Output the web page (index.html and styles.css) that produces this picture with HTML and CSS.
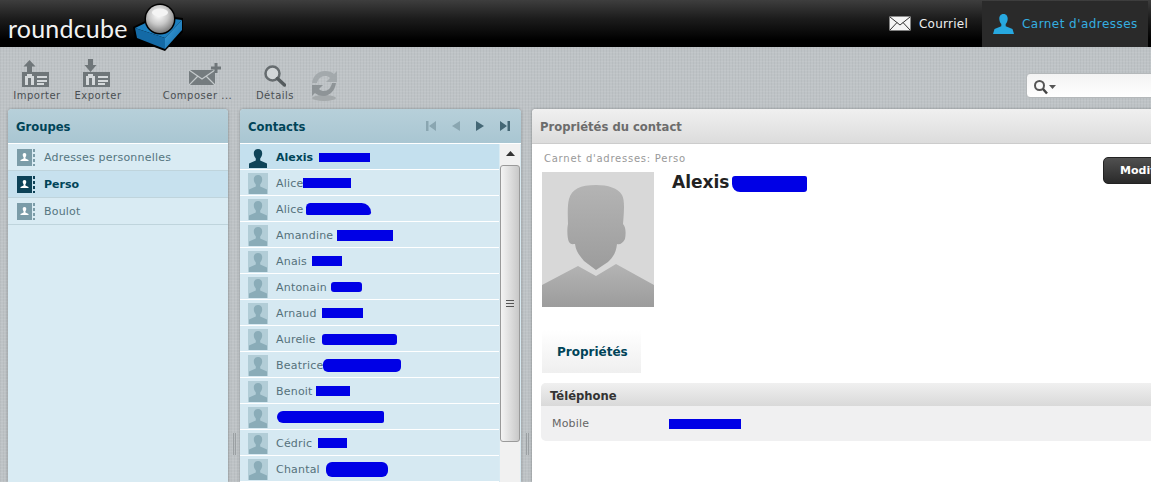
FILE: index.html
```html
<!DOCTYPE html>
<html lang="fr">
<head>
<meta charset="utf-8">
<title>Roundcube - Carnet d'adresses</title>
<link rel="stylesheet" href="styles.css">
</head>
<body>
<svg class="defs" width="0" height="0">
  <defs>
    <linearGradient id="photoG" x1="0" y1="0" x2="0" y2="1"><stop offset="0" stop-color="#b4b4b4"/><stop offset="1" stop-color="#9c9c9c"/></linearGradient>
    <linearGradient id="boxG" x1="0" y1="0" x2="1" y2="1"><stop offset="0" stop-color="#3fa0dc"/><stop offset="1" stop-color="#0f6aa8"/></linearGradient>
    <radialGradient id="ballG" cx=".45" cy=".35" r=".7"><stop offset="0" stop-color="#ffffff"/><stop offset=".5" stop-color="#c8c8c8"/><stop offset="1" stop-color="#6e6e6e"/></radialGradient>
    <symbol id="man" viewBox="0 0 20 20">
      <path d="M10 1c-2.800 0-4.200 1.800-4.200 4.200 0 2 .7 3.900 2 5.200v2L1 15.500V20h18v-4.500l-6.800-3.100v-2c1.300-1.300 2-3.200 2-5.200C14.200 2.800 12.800 1 10 1z"/>
    </symbol>
    <symbol id="grp" viewBox="0 0 18 17">
      <rect width="15" height="17"/>
      <path fill="#fff" d="M7.500 4c-1.200 0-1.800.9-1.800 1.900 0 1 .4 1.800.9 2.300v1.300l-3.100 1.400V12h8v-1.100L8.400 9.500V8.200c.5-.5.9-1.300.9-2.300C9.300 4.900 8.700 4 7.500 4z"/>
      <path d="M16 0h2v3h-2zM16 5h2v3h-2zM16 10h2v3h-2zM16 15h2v2h-2z"/>
    </symbol>
    <symbol id="card" viewBox="0 0 27 15">
      <rect width="27" height="15" fill="#6f7679"/>
      <path fill="#d5d9db" d="M3 13V4h2V2h5v2h2v9h-3V6H6v7zM15 4h10v2H15zM15 8h10v2H15zM15 11h7v2h-7z"/>
    </symbol>
  </defs>
</svg>

<header class="topbar">
  <div class="logo">
    <span class="logo-text">roundcube</span>
    <svg class="logo-mark" width="52" height="48" viewBox="0 0 52 48">
      <path d="M1 24 L25 12 L51 15 L51 29 L33 48 L3 37 Z" fill="#000"/>
      <path d="M3 25 L26 14 L50 17 L33 35 Z" fill="#1b7fc0"/>
      <path d="M3 25 L33 35 L33 46 L5 35 Z" fill="#146aa6"/>
      <path d="M33 35 L50 17 L50 27 L33 46 Z" fill="url(#boxG)"/>
      <circle cx="28" cy="16" r="15.500" fill="#000"/>
      <circle cx="28" cy="16" r="14" fill="url(#ballG)"/>
      <ellipse cx="28" cy="9.500" rx="8" ry="4" fill="#f4f4f4"/>
    </svg>
  </div>
  <nav class="taskbar">
    <a class="task">
      <svg width="22" height="15" viewBox="0 0 22 15"><rect x=".5" y=".5" width="21" height="14" fill="#f4f4f4"/><path d="M1 1l10 8 10-8M1 14l7-7.500M21 14l-7-7.500" fill="none" stroke="#333" stroke-width="1"/></svg>
      <span>Courriel</span>
    </a>
    <a class="task task-on">
      <svg width="21" height="20" viewBox="0 0 21 20"><path fill="#27a8e0" d="M10.500 0C7.500 0 6.300 2.200 6.300 4.800c0 2 .8 4 2 5.200v2.200L1.500 15 0 20h21l-1.500-5-6.800-2.800V10c1.200-1.200 2-3.200 2-5.200C14.700 2.200 13.500 0 10.500 0z"/></svg>
      <span>Carnet d'adresses</span>
    </a>
  </nav>
</header>

<div class="toolbar">
  <a class="tool tool-import">
    <svg class="tool-icon" width="28" height="28" viewBox="0 0 28 28"><path fill="#6f7679" d="M7.500 1l6 6.500h-3.500V13H5V7.500H1.500z"/><use href="#card" x="0" y="13" width="27" height="15"/></svg>
    <span>Importer</span>
  </a>
  <a class="tool tool-export">
    <svg class="tool-icon" width="28" height="28" viewBox="0 0 28 28"><path fill="#6f7679" d="M5 0h5v6h3.500l-6 7-6-7H5z"/><use href="#card" x="0" y="13" width="27" height="15"/></svg>
    <span>Exporter</span>
  </a>
  <a class="tool tool-compose">
    <svg class="compose-icon" width="32" height="28" viewBox="0 0 32 28"><path fill="#757c7f" d="M0 11h26v15H0z"/><path fill="none" stroke="#c5cacc" stroke-width="1.200" d="M0 11l13 9 13-9M0 26l9-9M26 26l-9-9"/><path fill="#6f7679" d="M25.500 4h3v3.500H32v3h-3.500V14h-3v-3.500H22v-3h3.500z"/></svg>
    <span>Composer ...</span>
  </a>
  <a class="tool tool-details">
    <svg width="22" height="22" viewBox="0 0 22 22"><circle cx="8.500" cy="8.500" r="7" fill="#d2d6d8" stroke="#666c6f" stroke-width="2.500"/><path d="M13.500 13.500l7 6.500" stroke="#555b5e" stroke-width="3.500" stroke-linecap="round"/></svg>
    <span>Détails</span>
  </a>
  <a class="tool tool-refresh">
    <svg width="30" height="33" viewBox="0 0 30 33"><ellipse cx="15" cy="30" rx="12" ry="3" fill="#a4a9ab"/><path fill="#a3a9ac" d="M3 15C4 7 10 3 16 3c4 0 7 1 9 3l3-3v11H17l4-4c-1.500-1.500-3-2-5-2-4 0-7 3-8 7z"/><path fill="#8e9497" d="M27 15c-1 8-7 13-12 13-4 0-7-1-9-3l-3 3V17h11l-4 4c1.500 1.500 3 2 5 2 4 0 7-3 8-8z"/></svg>
  </a>
  <div class="search">
    <svg width="24" height="16" viewBox="0 0 24 16"><circle cx="6.500" cy="6.500" r="4.500" fill="none" stroke="#555" stroke-width="2"/><path d="M10 10l4 4.500" stroke="#444" stroke-width="2.500"/><path d="M16 6h7l-3.500 4z" fill="#555"/></svg>
  </div>
</div>

<main class="layout">
  <section class="panel groups">
    <h2 class="panel-head">Groupes</h2>
    <ul class="group-list">
      <li class="group"><svg class="gicon" width="18" height="17"><use href="#grp"/></svg>Adresses personnelles</li>
      <li class="group group-on"><svg class="gicon" width="18" height="17"><use href="#grp"/></svg>Perso</li>
      <li class="group"><svg class="gicon" width="18" height="17"><use href="#grp"/></svg>Boulot</li>
    </ul>
  </section>

  <div class="splitter"><i class="grip"></i></div>

  <section class="panel contacts">
    <h2 class="panel-head contacts-head">
      <span>Contacts</span>
      <span class="pager">
        <svg width="10" height="10" viewBox="0 0 10 10"><path class="pg-off" d="M0 0h2.500v10H0zM10 0v10L3 5z"/></svg>
        <svg width="8" height="10" viewBox="0 0 8 10"><path class="pg-off" d="M8 0v10L0 5z"/></svg>
        <svg width="8" height="10" viewBox="0 0 8 10"><path class="pg-on" d="M0 0v10l8-5z"/></svg>
        <svg width="10" height="10" viewBox="0 0 10 10"><path class="pg-on" d="M0 0v10l7-5zM7.500 0H10v10H7.500z"/></svg>
      </span>
    </h2>
    <div class="contacts-body">
      <ul class="contact-list">
        <li class="contact contact-on"><span class="tile"><svg width="20" height="20"><use href="#man"/></svg></span><span>Alexis</span><i class="mark m1"></i></li>
        <li class="contact"><span class="tile"><svg width="20" height="20"><use href="#man"/></svg></span><span>Alice</span><i class="mark m2"></i></li>
        <li class="contact"><span class="tile"><svg width="20" height="20"><use href="#man"/></svg></span><span>Alice</span><i class="mark m3"></i></li>
        <li class="contact"><span class="tile"><svg width="20" height="20"><use href="#man"/></svg></span><span>Amandine</span><i class="mark m4"></i></li>
        <li class="contact"><span class="tile"><svg width="20" height="20"><use href="#man"/></svg></span><span>Anais</span><i class="mark m5"></i></li>
        <li class="contact"><span class="tile"><svg width="20" height="20"><use href="#man"/></svg></span><span>Antonain</span><i class="mark m6"></i></li>
        <li class="contact"><span class="tile"><svg width="20" height="20"><use href="#man"/></svg></span><span>Arnaud</span><i class="mark m7"></i></li>
        <li class="contact"><span class="tile"><svg width="20" height="20"><use href="#man"/></svg></span><span>Aurelie</span><i class="mark m8"></i></li>
        <li class="contact"><span class="tile"><svg width="20" height="20"><use href="#man"/></svg></span><span>Beatrice</span><i class="mark m9"></i></li>
        <li class="contact"><span class="tile"><svg width="20" height="20"><use href="#man"/></svg></span><span>Benoit</span><i class="mark m10"></i></li>
        <li class="contact"><span class="tile"><svg width="20" height="20"><use href="#man"/></svg></span><i class="mark m11"></i></li>
        <li class="contact"><span class="tile"><svg width="20" height="20"><use href="#man"/></svg></span><span>Cédric</span><i class="mark m12"></i></li>
        <li class="contact"><span class="tile"><svg width="20" height="20"><use href="#man"/></svg></span><span>Chantal</span><i class="mark m13"></i></li>
      </ul>
      <div class="scrollbar">
        <div class="sb-up"><svg width="9" height="5" viewBox="0 0 9 5"><path d="M4.500 0L9 5H0z" fill="#333"/></svg></div>
        <div class="sb-thumb"><i class="sb-grip"></i></div>
      </div>
    </div>
  </section>

  <div class="splitter splitter-narrow"><i class="grip"></i></div>

  <section class="panel details">
    <h2 class="details-head">Propriétés du contact</h2>
    <div class="details-body">
      <div class="source-row">
        <p class="source">Carnet d'adresses: Perso</p>
        <button class="edit">Modifier</button>
      </div>
      <div class="identity">
        <svg class="photo" width="112" height="135" viewBox="0 0 112 135">
          <rect width="112" height="135" fill="#d8d8d8"/>
          <path fill="url(#photoG)" d="M54 13C38 13 30 17 27 27C25 34 26 48 26 52C25 56 25 66 27 70C29 73 31 72 33 72C34 80 38 84 42 89L54 98L66 90C70 86 74 82 75 72C78 73 81 71 83 67C84 62 84 55 81 52C82 40 83 28 80 23C76 16 66 13 54 13Z"/>
          <path fill="url(#photoG)" d="M0 113L36 94L54 104L74 92L112 113V135H0Z"/>
        </svg>
        <h3 class="fullname">Alexis<i class="mark name-mark"></i></h3>
      </div>
      <div class="tab">Propriétés</div>
      <div class="fieldset">
        <div class="legend">Téléphone</div>
        <div class="field"><span class="field-label">Mobile</span><i class="mark phone-mark"></i></div>
      </div>
    </div>
  </section>
</main>
</body>
</html>
```

FILE: styles.css
```css
* { box-sizing: border-box; }
html, body { margin: 0; height: 482px; overflow: hidden; }
body {
  width: 1151px;
  font-family: "DejaVu Sans", Verdana, sans-serif;
  font-size: 11px;
  letter-spacing: .2px;
  color: #376572;
  background-color: #bec3c6;
  background-image:
    repeating-linear-gradient(0deg, rgba(255,255,255,.07) 0 1px, transparent 1px 3px),
    repeating-linear-gradient(90deg, rgba(0,0,0,.035) 0 1px, transparent 1px 3px);
}
.defs { position: absolute; }
ul { list-style: none; margin: 0; padding: 0; }
h2, h3, p { margin: 0; }
i { display: block; }

.topbar {
  height: 47px;
  display: flex;
  justify-content: space-between;
  background: linear-gradient(#3e3e3e 0, #1c1c1c 40%, #000 85%);
}
.logo { display: flex; align-items: flex-start; padding: 3px 0 0 8px; height: 47px; }
.logo-text {
  width: 119px;
  font-family: "Lato", sans-serif;
  font-weight: 400;
  font-size: 25px;
  line-height: 50px;
  letter-spacing: .2px;
  color: #f2f2f2;
}
.logo-mark { margin-left: 5px; margin-top: 0; }
.taskbar { display: flex; padding-right: 3px; }
.task {
  display: flex;
  align-items: center;
  gap: 8px;
  font-size: 12px;
  letter-spacing: .25px;
  white-space: nowrap;
  color: #eee;
  padding: 0 14px 0 0;
}
.task-on {
  margin-top: 1px;
  width: 166px;
  padding: 0 0 0 11px;
  letter-spacing: .45px;
  color: #35aee0;
  background: #2a2a2a;
}

.toolbar {
  height: 62px;
  display: flex;
  align-items: flex-start;
  padding: 12px 0 0 12px;
}
.tool {
  display: flex;
  flex-direction: column;
  align-items: center;
  gap: 3px;
  font-size: 10px;
  letter-spacing: .5px;
  color: #4a4f52;
  white-space: nowrap;
}
.tool-icon { margin-right: 2px; }
.compose-icon { margin-left: 14px; }
.tool-import { width: 50px; }
.tool-export { width: 50px; margin-left: 11px; }
.tool-compose { width: 75px; margin-left: 37px; }
.tool-details { width: 42px; margin-left: 19px; padding-top: 6px; }
.tool-refresh { margin-left: 13px; padding-top: 9px; }
.search {
  margin-left: auto;
  margin-right: -20px;
  margin-top: 14px;
  width: 145px;
  height: 25px;
  padding: 5px 0 0 6px;
  background: linear-gradient(#f3f3f3, #fff);
  border: 1px solid #b4b8ba;
  border-radius: 4px;
}

.layout {
  display: flex;
  padding-left: 8px;
  height: 373px;
}
.panel {
  flex: none;
  border-radius: 4px 4px 0 0;
  box-shadow: 0 0 3px rgba(0,0,0,.3);
  overflow: hidden;
}
.panel-head {
  height: 35px;
  padding-left: 8px;
  font-size: 11.6px;
  letter-spacing: 0;
  line-height: 36px;
  font-weight: bold;
  color: #004458;
  background: linear-gradient(#b7d0da, #a9c6d2);
  border-bottom: 1px solid #fff;
}
.groups { width: 220px; background: #d9ebf3; }
.contacts { width: 281px; background: #d9ebf3; }
.splitter { flex: none; width: 12px; padding: 324px 0 0 5px; }
.splitter-narrow { width: 11px; }
.grip { width: 3px; height: 22px; border: solid #9ba0a3; border-width: 0 1px; }

.group {
  height: 27px;
  display: flex;
  align-items: center;
  gap: 9px;
  padding-left: 9px;
  color: #55757f;
  border-bottom: 1px solid #bfd4dc;
}
.gicon { fill: #7b9ca8; }
.group-on { background: #c7e1ee; color: #004458; font-weight: bold; letter-spacing: 0; }
.group-on .gicon { fill: #0d4257; }

.contacts-head { display: flex; justify-content: space-between; padding-right: 11px; }
.pager { display: flex; align-items: center; gap: 16px; }
.pg-off { fill: #8aa6b1; }
.pg-on { fill: #446775; }
.contacts-body { display: flex; height: 338px; }
.contact-list { width: 259px; }
.contact {
  height: 26px;
  display: flex;
  align-items: center;
  padding: 1px 0 0 8px;
  white-space: nowrap;
  color: #55717b;
  background: #d6e9f2;
  border-bottom: 1px solid #fff;
}
.contact-on { background: #c4e0ee; color: #004458; font-weight: bold; letter-spacing: 0; }
.tile {
  width: 20px;
  height: 21px;
  margin-right: 8px;
  background-color: #b2cdd7;
  fill: #8aacb8;
}
.tile svg { display: block; margin-top: 1px; }
.contact-on .tile { background-color: #c4e0ee; fill: #0f4459; }

.mark { background: #0000e6; flex: none; }
.m1 { width: 51px; height: 9px; margin-left: 6px; }
.m2 { width: 48px; height: 10px; margin-left: 0; }
.m3 { width: 65px; height: 12px; margin-left: 3px; border-radius: 5px 10px 3px 2px; }
.m4 { width: 56px; height: 11px; margin-left: 4px; }
.m5 { width: 30px; height: 10px; margin-left: 5px; }
.m6 { width: 31px; height: 10px; margin-left: 4px; border-radius: 3px; }
.m7 { width: 41px; height: 10px; margin-left: 5px; }
.m8 { width: 75px; height: 11px; margin-left: 6px; border-radius: 3px; }
.m9 { width: 78px; height: 13px; margin-left: 0; border-radius: 5px 3px 5px 5px; }
.m10 { width: 34px; height: 10px; margin-left: 3px; }
.m11 { width: 107px; height: 12px; margin-left: 1px; border-radius: 6px 2px 2px 6px; }
.m12 { width: 29px; height: 10px; margin-left: 6px; }
.m13 { width: 62px; height: 15px; margin-left: 6px; border-radius: 6px; }

.scrollbar { width: 20px; margin-left: 1px; background: #f1f1f1; height: 338px; }
.sb-up { height: 21px; display: flex; justify-content: center; padding-top: 7px; }
.sb-thumb {
  height: 277px;
  padding: 134px 0 0 5px;
  background: linear-gradient(90deg, #f4f4f4, #c8c8c8);
  border: 1px solid #9a9a9a;
  border-radius: 3px;
}
.sb-grip {
  width: 8px;
  height: 8px;
  background: repeating-linear-gradient(#555 0 1px, transparent 1px 3px);
}

.details { width: 640px; background: #fff; }
.details-head {
  height: 35px;
  padding-left: 8px;
  font-size: 11.6px;
  letter-spacing: 0;
  line-height: 36px;
  font-weight: bold;
  color: #6c6c6c;
  background: linear-gradient(#f0f0f0, #dcdcdc);
  border-bottom: 1px solid #ccc;
}
.details-body { padding: 7px 0 0 10px; }
.source-row { display: flex; height: 21px; }
.source { font-size: 10px; letter-spacing: .75px; color: #999; padding-left: 2px; line-height: 15px; flex: none; width: 561px; }
.edit {
  height: 27px;
  width: 70px;
  flex: none;
  margin-top: 6px;
  padding: 0 0 0 16px;
  text-align: left;
  white-space: nowrap;
  border: 1px solid #222;
  border-radius: 5px;
  font: bold 11px "DejaVu Sans", sans-serif;
  color: #fff;
  background: linear-gradient(#505050, #2a2a2a);
}
.identity { display: flex; height: 135px; }
.photo { flex: none; display: block; }
.fullname {
  display: flex;
  margin: 0 0 0 18px;
  font-size: 17px;
  letter-spacing: 0;
  line-height: 20px;
  height: 22px;
  color: #222;
}
.name-mark { width: 75px; height: 16px; margin: 4px 0 0 3px; border-radius: 3px 2px 3px 8px; }
.tab {
  width: 99px;
  height: 43px;
  margin-top: 23px;
  padding: 15px 0 0 15px;
  font-size: 12px;
  letter-spacing: 0;
  font-weight: bold;
  color: #004458;
  background: linear-gradient(#fff, #efefef);
}
.fieldset {
  margin: 10px 0 0 -1px;
  border-radius: 5px;
  overflow: hidden;
  background: #f0f0f1;
  height: 58px;
}
.legend {
  height: 23px;
  padding-left: 9px;
  line-height: 26px;
  font-size: 11.6px;
  letter-spacing: 0;
  font-weight: bold;
  color: #333;
  background: linear-gradient(#f0f0f0, #d9d9d9);
}
.field { display: flex; align-items: center; height: 34px; padding-left: 11px; color: #666; }
.field-label { width: 117px; }
.phone-mark { width: 72px; height: 10px; margin-top: 1px; }
```
